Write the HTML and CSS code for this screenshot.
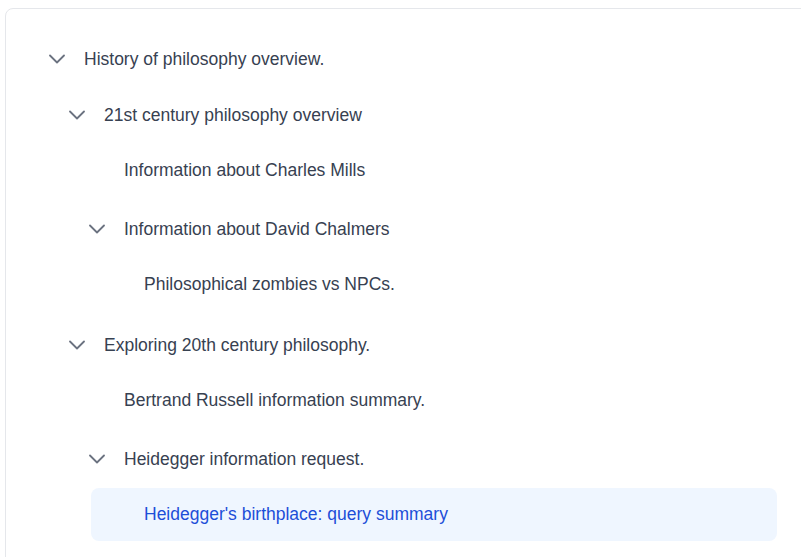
FILE: index.html
```html
<!DOCTYPE html>
<html lang="en">
<head>
<meta charset="utf-8">
<title>Tree</title>
<link rel="stylesheet" href="styles.css">
</head>
<body>
<div class="card">
  <ul class="tree">
    <li class="node">
      <div class="row header"><svg class="chev" viewBox="0 0 16 16"><path d="M1 4.5 L8 11.5 L15 4.5"/></svg><span class="label">History of philosophy overview.</span></div>
      <ul class="tree children">
        <li class="node">
          <div class="row header"><svg class="chev" viewBox="0 0 16 16"><path d="M1 4.5 L8 11.5 L15 4.5"/></svg><span class="label">21st century philosophy overview</span></div>
          <ul class="tree children">
            <li class="node">
              <div class="row leaf"><span class="spacer"></span><span class="label">Information about Charles Mills</span></div>
            </li>
            <li class="node">
              <div class="row header"><svg class="chev" viewBox="0 0 16 16"><path d="M1 4.5 L8 11.5 L15 4.5"/></svg><span class="label">Information about David Chalmers</span></div>
              <ul class="tree children">
                <li class="node">
                  <div class="row leaf"><span class="spacer"></span><span class="label">Philosophical zombies vs NPCs.</span></div>
                </li>
              </ul>
            </li>
          </ul>
        </li>
        <li class="node">
          <div class="row header"><svg class="chev" viewBox="0 0 16 16"><path d="M1 4.5 L8 11.5 L15 4.5"/></svg><span class="label">Exploring 20th century philosophy.</span></div>
          <ul class="tree children">
            <li class="node">
              <div class="row leaf"><span class="spacer"></span><span class="label">Bertrand Russell information summary.</span></div>
            </li>
            <li class="node">
              <div class="row header"><svg class="chev" viewBox="0 0 16 16"><path d="M1 4.5 L8 11.5 L15 4.5"/></svg><span class="label">Heidegger information request.</span></div>
              <ul class="tree children">
                <li class="node">
                  <div class="row leaf selected"><span class="spacer"></span><span class="label">Heidegger's birthplace: query summary</span></div>
                </li>
              </ul>
            </li>
          </ul>
        </li>
      </ul>
    </li>
  </ul>
</div>
</body>
</html>
```

FILE: styles.css
```css
* { box-sizing: border-box; }
html, body { margin: 0; padding: 0; background: #ffffff; }
body {
  font-family: "Liberation Sans", Arial, sans-serif;
  font-size: 17.5px;
  color: #374151;
  overflow: hidden;
  height: 557px;
}
.card {
  margin: 8px 0 0 5px;
  width: 830px;
  border: 1px solid #e5e7eb;
  border-radius: 8px;
  padding: 23px 57px 40px 25px;
}
.tree {
  list-style: none;
  margin: 0;
  padding: 0;
  display: flex;
  flex-direction: column;
  gap: 5px;
}
.children {
  padding: 2px 0 1px 20px;
}
.node { display: flow-root; }
.row {
  display: flex;
  align-items: center;
  gap: 19px;
  padding-left: 18px;
  border-radius: 8px;
}
.header { height: 54px; }
.leaf { height: 53px; }
.chev {
  width: 16px;
  height: 16px;
  flex: none;
  fill: none;
  stroke: #6b7280;
  stroke-width: 1.8;
  stroke-linecap: round;
  stroke-linejoin: round;
}
.spacer { width: 16px; flex: none; }
.label { white-space: nowrap; }
.selected {
  background: #eff6ff;
  color: #1d4ed8;
}
```
